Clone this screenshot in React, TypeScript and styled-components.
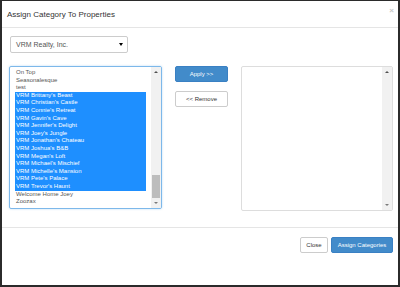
import React from "react";
import styled, { createGlobalStyle } from "styled-components";

const GlobalStyle = createGlobalStyle`
  html, body {
    margin: 0;
    padding: 0;
    background: #ffffff;
  }
  body {
    font-family: "Liberation Sans", Arial, sans-serif;
  }
`;

const Frame = styled.div`
  width: 400px;
  height: 287px;
  box-sizing: border-box;
  border-top: 1px solid #2b2b2b;
  border-left: 2px solid #2b2b2b;
  border-right: 2px solid #2b2b2b;
  border-bottom: 2px solid #2b2b2b;
  background: #fff;
  display: flex;
  flex-direction: column;
`;

const Header = styled.div`
  height: 26px;
  border-bottom: 1px solid #e5e5e5;
  display: flex;
  align-items: center;
  justify-content: space-between;
  padding: 0 4px 0 5px;
`;

const Title = styled.h4`
  margin: 0;
  font-size: 8px;
  font-weight: normal;
  color: #333;
`;

const CloseX = styled.span`
  font-size: 8px;
  line-height: 8px;
  font-weight: bold;
  color: #c9c9c9;
  margin-top: -6px;
`;

const Body = styled.div`
  padding: 8px 5px 16px 7px;
  display: flex;
  flex-direction: column;
  gap: 13px;
`;

const SelectBox = styled.div`
  margin-left: 1px;
  width: 118px;
  height: 17px;
  box-sizing: border-box;
  border: 1px solid #cccccc;
  border-radius: 2px;
  display: flex;
  align-items: center;
  justify-content: space-between;
  padding: 0 4px 0 5px;
  font-size: 7px;
  color: #555;
`;

const Caret = styled.span`
  width: 0;
  height: 0;
  border-left: 2px solid transparent;
  border-right: 2px solid transparent;
  border-top: 3px solid #000;
`;

const Columns = styled.div`
  display: flex;
  align-items: flex-start;
  gap: 13px;
`;

const ListBox = styled.div<{ $focused?: boolean; $h: number; $w: number }>`
  width: ${(p) => p.$w}px;
  height: ${(p) => p.$h}px;
  box-sizing: border-box;
  border: 1px solid ${(p) => (p.$focused ? "#7db8ea" : "#dddddd")};
  border-radius: 2px;
  box-shadow: ${(p) =>
    p.$focused ? "0 0 2px rgba(102, 175, 233, 0.5)" : "none"};
  display: flex;
  overflow: hidden;
`;

const ListContent = styled.div`
  flex: 1;
  padding: 0 5px;
  overflow: hidden;
`;

const Options = styled.div`
  margin-top: -5.7px;
`;

const Option = styled.div<{ $selected?: boolean }>`
  height: 7.62px;
  line-height: 7.62px;
  font-size: 6px;
  padding-left: 1px;
  white-space: nowrap;
  color: ${(p) => (p.$selected ? "#fff" : "#555")};
  background: ${(p) => (p.$selected ? "#1e8fff" : "transparent")};
`;

const ScrollBar = styled.div`
  width: 10px;
  background: #f1f1f1;
  display: flex;
  flex-direction: column;
`;

const ScrollArrow = styled.div`
  height: 10px;
  display: flex;
  align-items: center;
  justify-content: center;
`;

const ArrowGlyph = styled.span<{ $down?: boolean }>`
  width: 0;
  height: 0;
  border-left: 2px solid transparent;
  border-right: 2px solid transparent;
  ${(p) =>
    p.$down
      ? "border-top: 2px solid #7a7a7a;"
      : "border-bottom: 2px solid #505050;"}
`;

const Track = styled.div`
  flex: 1;
  display: flex;
  flex-direction: column;
  justify-content: flex-end;
  align-items: center;
`;

const Thumb = styled.div`
  width: 8px;
  height: 23px;
  background: #bdbdbd;
`;

const ButtonColumn = styled.div`
  width: 53px;
  display: flex;
  flex-direction: column;
  gap: 9px;
`;

const Button = styled.button<{ $primary?: boolean; $w?: number }>`
  height: 16px;
  width: ${(p) => (p.$w ? `${p.$w}px` : "100%")};
  padding: 0;
  box-sizing: border-box;
  border-radius: 2px;
  font-family: "Liberation Sans", Arial, sans-serif;
  font-size: 6px;
  cursor: pointer;
  border: 1px solid ${(p) => (p.$primary ? "#3a80c3" : "#cccccc")};
  background: ${(p) => (p.$primary ? "#428bca" : "#fff")};
  color: ${(p) => (p.$primary ? "#fff" : "#333")};
`;

const Footer = styled.div`
  border-top: 1px solid #e5e5e5;
  padding: 9px 5px 0 0;
  display: flex;
  justify-content: flex-end;
  gap: 3px;
`;

const items = [
  "New Seasonal Property",
  "On Top",
  "Seasonalesque",
  "test",
  "VRM Brittany's Beast",
  "VRM Christian's Castle",
  "VRM Connie's Retreat",
  "VRM Gavin's Cave",
  "VRM Jennifer's Delight",
  "VRM Joey's Jungle",
  "VRM Jonathan's Chateau",
  "VRM Joshua's B&B",
  "VRM Megan's Loft",
  "VRM Michael's Mischief",
  "VRM Michelle's Mansion",
  "VRM Pete's Palace",
  "VRM Trevor's Haunt",
  "Welcome Home Joey",
  "Zoozax",
];

const Scroller = ({ thumb }: { thumb?: boolean }) => (
  <ScrollBar>
    <ScrollArrow>
      <ArrowGlyph />
    </ScrollArrow>
    <Track>{thumb && <Thumb />}</Track>
    <ScrollArrow>
      <ArrowGlyph $down />
    </ScrollArrow>
  </ScrollBar>
);

export default function App() {
  return (
    <>
      <GlobalStyle />
      <Frame>
        <Header>
          <Title>Assign Category To Properties</Title>
          <CloseX>×</CloseX>
        </Header>
        <Body>
          <SelectBox>
            <span>VRM Realty, Inc.</span>
            <Caret />
          </SelectBox>
          <Columns>
            <ListBox $focused $w={153} $h={143}>
              <ListContent>
                <Options>
                  {items.map((name) => (
                    <Option key={name} $selected={name.startsWith("VRM ")}>
                      {name}
                    </Option>
                  ))}
                </Options>
              </ListContent>
              <Scroller thumb />
            </ListBox>
            <ButtonColumn>
              <Button $primary>Apply &gt;&gt;</Button>
              <Button>&lt;&lt; Remove</Button>
            </ButtonColumn>
            <ListBox $w={152} $h={145}>
              <ListContent />
              <Scroller />
            </ListBox>
          </Columns>
        </Body>
        <Footer>
          <Button $w={28}>Close</Button>
          <Button $primary $w={62}>
            Assign Categories
          </Button>
        </Footer>
      </Frame>
    </>
  );
}
